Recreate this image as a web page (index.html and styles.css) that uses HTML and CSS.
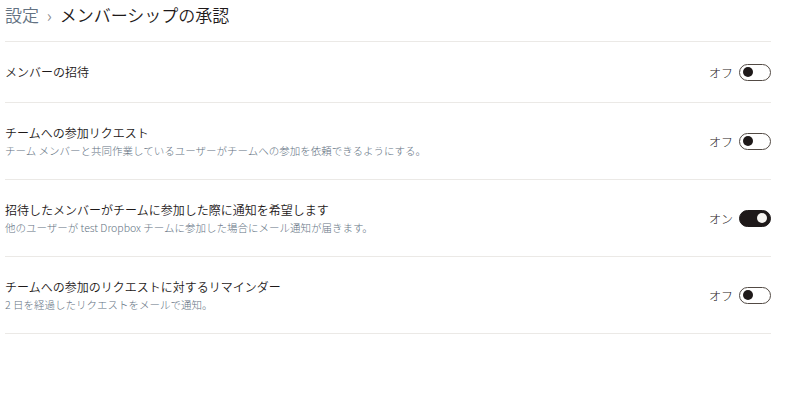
FILE: index.html
```html
<!DOCTYPE html>
<html lang="ja">
<head>
  <meta charset="UTF-8">
  <title>メンバーシップの承認</title>
  <link rel="stylesheet" href="styles.css">
</head>
<body>

<div class="settings">
  <!-- パンくず -->
  <div class="crumbs">
    <span class="crumb-parent">設定</span>
    <span class="crumb-sep">›</span>
    <span class="crumb-current">メンバーシップの承認</span>
  </div>

  <div class="row">
    <div class="row-text">
      <div class="row-title">メンバーの招待</div>
    </div>
    <div class="switch-wrap">
      <span class="switch-label">オフ</span>
      <span class="switch"><span class="knob"></span></span>
    </div>
  </div>

  <div class="row">
    <div class="row-text">
      <div class="row-title">チームへの参加リクエスト</div>
      <div class="row-desc">チーム メンバーと共同作業しているユーザーがチームへの参加を依頼できるようにする。</div>
    </div>
    <div class="switch-wrap">
      <span class="switch-label">オフ</span>
      <span class="switch"><span class="knob"></span></span>
    </div>
  </div>

  <div class="row">
    <div class="row-text">
      <div class="row-title">招待したメンバーがチームに参加した際に通知を希望します</div>
      <div class="row-desc">他のユーザーが test Dropbox チームに参加した場合にメール通知が届きます。</div>
    </div>
    <div class="switch-wrap">
      <span class="switch-label">オン</span>
      <span class="switch on"><span class="knob"></span></span>
    </div>
  </div>

  <div class="row">
    <div class="row-text">
      <div class="row-title">チームへの参加のリクエストに対するリマインダー</div>
      <div class="row-desc">2 日を経過したリクエストをメールで通知。</div>
    </div>
    <div class="switch-wrap">
      <span class="switch-label">オフ</span>
      <span class="switch"><span class="knob"></span></span>
    </div>
  </div>
</div>

</body>
</html>
```

FILE: styles.css
```css
body {
  margin: 0;
  padding: 0;
  background: #fff;
  color: #1e1919;
  font-family: 'Noto Sans CJK JP', 'Noto Sans', sans-serif;
  font-weight: 300;
}
.settings {
  width: 766px;
  margin-left: 5px;
}
.crumbs {
  height: 30px;
  line-height: 30px;
  padding-bottom: 11px;
  border-bottom: 1px solid #ebe9e6;
  font-size: 17px;
  font-weight: 350;
  white-space: nowrap;
}
.crumb-parent {
  color: #637282;
}
.crumb-sep {
  color: #8c8c8c;
  margin: 0 4px;
}
.row {
  display: flex;
  align-items: center;
  padding: 20px 0;
  border-bottom: 1px solid #ebe9e6;
}
.row-text {
  flex: 1;
}
.row-title {
  font-size: 12px;
  line-height: 20px;
  font-weight: 350;
}
.row-desc {
  font-size: 10.5px;
  line-height: 16px;
  color: #637282;
}
.switch-wrap {
  display: flex;
  align-items: center;
  gap: 6px;
}
.switch-label {
  font-size: 12px;
  color: #1e1919;
}
.switch {
  position: relative;
  box-sizing: border-box;
  width: 32px;
  height: 17px;
  border: 1px solid #524a44;
  border-radius: 9px;
  background: #fff;
}
.knob {
  position: absolute;
  top: 2.5px;
  left: 3px;
  width: 10px;
  height: 10px;
  border-radius: 50%;
  background: #1e1919;
}
.switch.on {
  background: #1e1919;
  border-color: #1e1919;
}
.switch.on .knob {
  left: auto;
  right: 3px;
  background: #f7f5f2;
}
```
